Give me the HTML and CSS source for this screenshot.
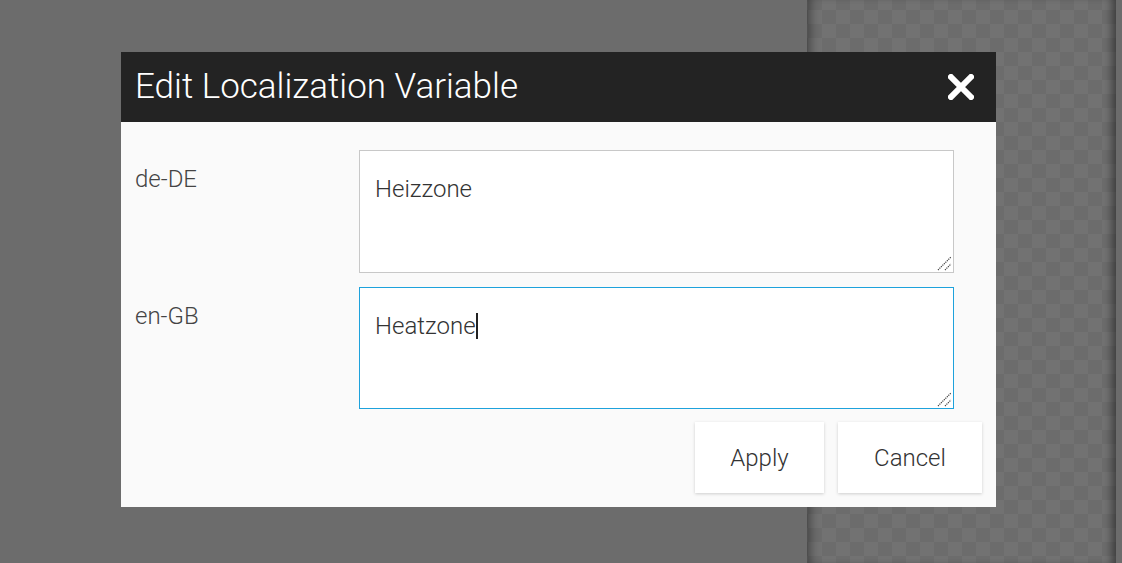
FILE: index.html
```html
<!DOCTYPE html>
<html>
<head>
<meta charset="utf-8">
<link rel="stylesheet" href="styles.css">
</head>
<body>
<div class="backdrop">
  <div class="plain"></div>
  <div class="checker"></div>
  <div class="edge"></div>
</div>
<div class="dialog">
  <div class="dialog-header">
    <h1 class="title">Edit Localization Variable</h1>
    <button class="close" aria-label="Close">
      <svg width="26" height="26" viewBox="0 0 26 26"><path d="M3 3 L23 23 M23 3 L3 23" stroke="#fff" stroke-width="6" stroke-linecap="square"/></svg>
    </button>
  </div>
  <div class="dialog-body">
    <div class="row">
      <label class="lang">de-DE</label>
      <div class="field">Heizzone<svg class="grip" width="15" height="15" viewBox="0 0 15 15"><path d="M1 14 L14 1 M8 14 L14 8" stroke="#444" stroke-width="1.2" stroke-dasharray="1.2 0.9"/></svg></div>
    </div>
    <div class="row">
      <label class="lang">en-GB</label>
      <div class="field focused">Heatzone<span class="caret"></span><svg class="grip" width="15" height="15" viewBox="0 0 15 15"><path d="M1 14 L14 1 M8 14 L14 8" stroke="#444" stroke-width="1.2" stroke-dasharray="1.2 0.9"/></svg></div>
    </div>
    <div class="actions">
      <button class="btn btn-apply">Apply</button>
      <button class="btn btn-cancel">Cancel</button>
    </div>
  </div>
</div>
</body>
</html>
```
FILE: styles.css
```css
html, body {
  margin: 0;
  padding: 0;
  width: 1122px;
  height: 563px;
  overflow: hidden;
  font-family: Roboto, "Liberation Sans", sans-serif;
  background: #6c6c6c;
}
.backdrop {
  display: flex;
  width: 1122px;
  height: 563px;
}
.plain {
  width: 807px;
  background: #6c6c6c;
}
.checker {
  flex: 1;
  background-color: #6c6c6c;
  background-image:
    linear-gradient(45deg, #727272 25%, transparent 25%, transparent 75%, #727272 75%),
    linear-gradient(45deg, #727272 25%, transparent 25%, transparent 75%, #727272 75%);
  background-size: 28px 28px;
  background-position: 1px -4px, 15px 10px;
  box-shadow: inset 10px 0 8px -6px rgba(0,0,0,0.35), inset -10px 0 8px -6px rgba(0,0,0,0.45);
}
.edge {
  width: 6px;
  background: #6c6c6c;
}
.dialog {
  position: absolute;
  left: 121px;
  top: 52px;
  width: 875px;
  height: 455px;
  background: #fafafa;
  display: flex;
  flex-direction: column;
}
.dialog-header {
  height: 70px;
  background: #232323;
  display: flex;
  align-items: center;
  justify-content: space-between;
  padding: 0 22px 0 14px;
}
.title {
  margin: 0;
  color: #fff;
  font-size: 35px;
  font-weight: 300;
  line-height: 40px;
}
.close {
  background: none;
  border: 0;
  padding: 0;
  width: 26px;
  height: 26px;
  display: block;
  cursor: pointer;
}
.close svg { display: block; }
.dialog-body {
  flex: 1;
  padding: 28px 14px 14px 14px;
  display: flex;
  flex-direction: column;
}
.row {
  display: grid;
  grid-template-columns: 224px 595px;
  margin-bottom: 14px;
}
.row + .row { margin-bottom: 13px; }
.lang {
  font-size: 24px;
  font-weight: 300;
  color: #444;
  padding-top: 16px;
  line-height: 26px;
}
.field {
  position: relative;
  box-sizing: border-box;
  height: 123px;
  border: 1px solid #c8c8c8;
  background: #fff;
  padding: 24px 15px;
  font-size: 24px;
  font-weight: 300;
  color: #333;
  line-height: 28px;
}
.row + .row .field { height: 122px; }
.field.focused {
  border-color: #1ea2dc;
}
.caret {
  display: inline-block;
  width: 2px;
  height: 26px;
  background: #222;
  vertical-align: -5px;
}
.grip {
  position: absolute;
  right: 1px;
  bottom: 1px;
}
.actions {
  display: flex;
  justify-content: flex-end;
  gap: 14px;
}
.btn {
  height: 71px;
  background: #fff;
  border: 0;
  box-shadow: 0 1px 3px rgba(0,0,0,0.18);
  font-family: Roboto, "Liberation Sans", sans-serif;
  font-size: 24px;
  font-weight: 300;
  color: #333;
  padding: 0;
}
.btn-apply { width: 129px; }
.btn-cancel { width: 144px; }
```
